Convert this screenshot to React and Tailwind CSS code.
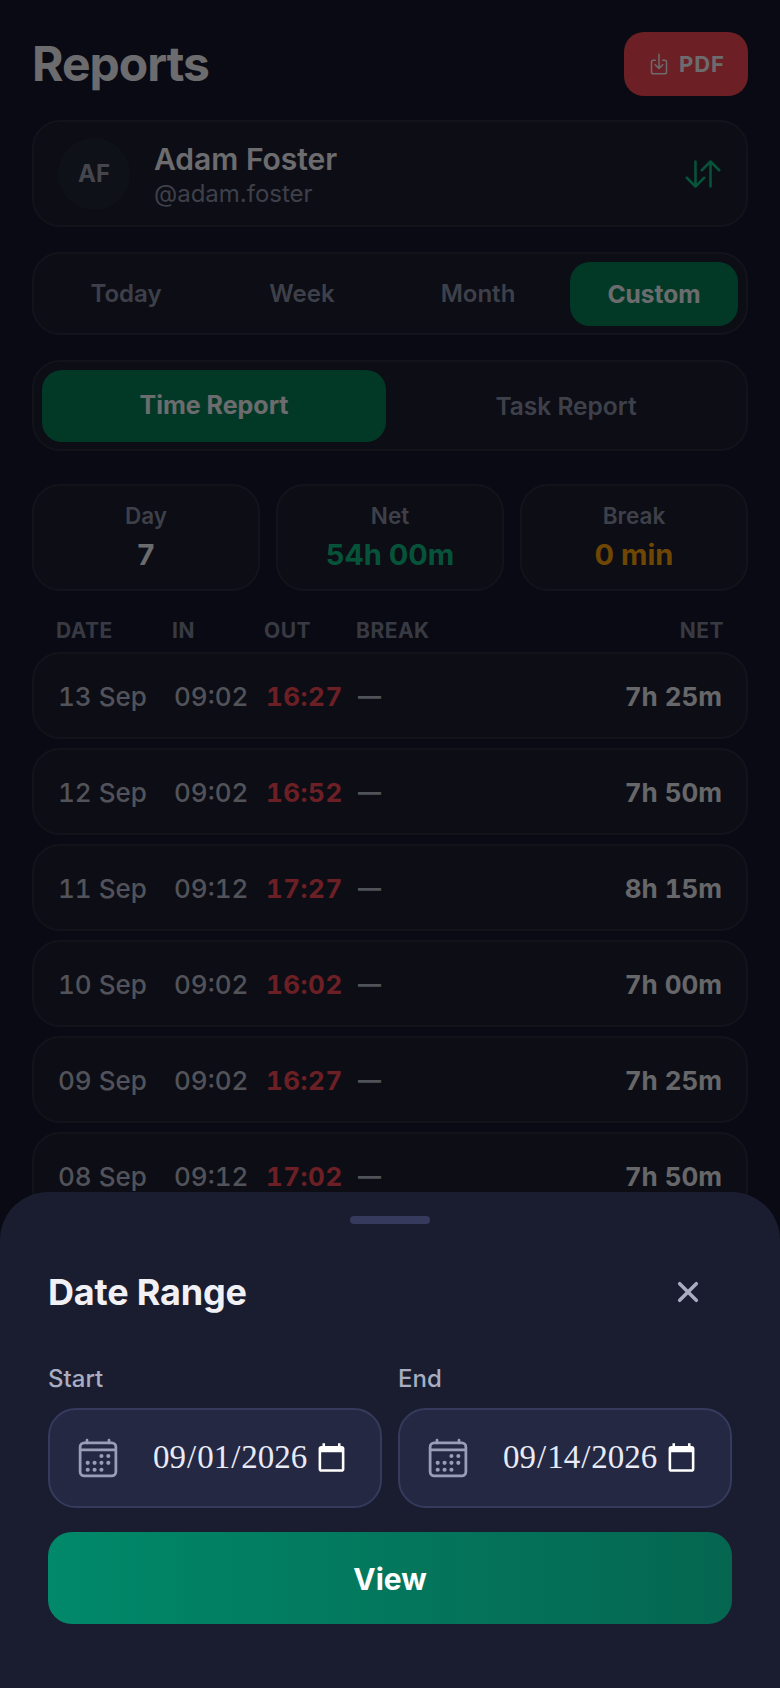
import React from 'react';
import { IoCalendarOutline, IoClose, IoDownloadOutline, IoSwapVertical } from 'react-icons/io5';

const rows = [
  ['13 Sep', '09:02', '16:27', '7h 25m'],
  ['12 Sep', '09:02', '16:52', '7h 50m'],
  ['11 Sep', '09:12', '17:27', '8h 15m'],
  ['10 Sep', '09:02', '16:02', '7h 00m'],
  ['09 Sep', '09:02', '16:27', '7h 25m'],
  ['08 Sep', '09:12', '17:02', '7h 50m'],
];

const cols = 'grid grid-cols-[116px_92px_92px_1fr_auto] items-center';
const panel = 'border-2 border-[#282b3c] bg-[#1b1e30]';

const Stat = ({ label, value, color }) => (
  <div className={`flex h-[107px] flex-col items-center justify-center rounded-[28px] ${panel}`}>
    <span className="text-[22.5px] leading-7 font-semibold text-[#8b8fa3]">{label}</span>
    <span className={`mt-[7px] text-[29px] leading-9 font-bold ${color}`}>{value}</span>
  </div>
);

const DateField = ({ label, value }) => (
  <div className="min-w-0">
    <label className="mb-[13px] block text-[24px] leading-8 font-medium text-[#a9adc1]">{label}</label>
    <div className="flex h-[100px] items-center rounded-[28px] border-2 border-[#363a5c] bg-[#252842] pr-[30px] pl-[26px]">
      <IoCalendarOutline className="shrink-0 text-[44px] text-[#9a9db5]" />
      <input
        type="date"
        defaultValue={value}
        className="ml-[32px] min-w-0 flex-1 bg-transparent text-[33px] text-[#e8eaf6] [color-scheme:dark] [font-family:'Liberation_Serif',serif] outline-none"
      />
    </div>
  </div>
);

export default function App() {
  return (
    <div className="relative h-[1688px] w-[780px] overflow-hidden bg-[#14172b] px-8 pt-8 font-['Inter',sans-serif] text-[#f0f0f5]">
      {/* Cabecalho */}
      <div className="flex h-16 items-center justify-between">
        <h1 className="text-[48px] font-bold tracking-[-1px]">Reports</h1>
        <button className="flex h-16 w-[124px] items-center justify-center gap-2 rounded-[20px] bg-[#f04650] text-[22px] font-bold tracking-[1px] text-[#f0f0f5]">
          <IoDownloadOutline className="text-[24px]" />
          PDF
        </button>
      </div>

      {/* Usuario */}
      <div className={`mt-6 flex h-[107px] items-center rounded-[28px] px-6 ${panel}`}>
        <div className="flex h-[72px] w-[72px] items-center justify-center rounded-full bg-[#202634] text-[24px] font-bold text-[#9a9cab]">
          AF
        </div>
        <div className="ml-6 flex-1">
          <div className="mt-[2px] text-[30px] leading-9 font-semibold">Adam Foster</div>
          <div className="mt-[3px] text-[24px] leading-7 text-[#8b8fa3]">@adam.foster</div>
        </div>
        <IoSwapVertical className="mr-[-1px] text-[40px] text-[#10b981]" />
      </div>

      {/* Periodo */}
      <div className={`mt-[25px] grid h-[83px] grid-cols-4 items-center gap-2 rounded-[28px] p-2 ${panel}`}>
        {['Today', 'Week', 'Month'].map((t) => (
          <div key={t} className="text-center text-[24px] font-semibold text-[#8b8fa3]">{t}</div>
        ))}
        <div className="flex h-16 items-center justify-center rounded-[20px] bg-[#057f56] text-[24.5px] font-bold">Custom</div>
      </div>

      {/* Tipo de relatorio */}
      <div className={`mt-[25px] grid h-[91px] grid-cols-2 items-center gap-2 rounded-[28px] p-2 ${panel}`}>
        <div className="flex h-[72px] items-center justify-center rounded-[20px] bg-[#057f56] text-[25px] font-bold">Time Report</div>
        <div className="text-center text-[24.5px] font-semibold text-[#8b8fa3]">Task Report</div>
      </div>

      {/* Resumo */}
      <div className="mt-[33px] grid grid-cols-3 gap-4">
        <Stat label="Day" value="7" color="text-[#f0f0f5]" />
        <Stat label="Net" value="54h 00m" color="text-[#10b981]" />
        <Stat label="Break" value="0 min" color="text-[#f59e0b]" />
      </div>

      {/* Tabela */}
      <div className={`${cols} mt-[22px] mb-[3px] h-9 px-6 text-[21px] font-bold tracking-[0.5px] text-[#7c8094]`}>
        <span>DATE</span>
        <span>IN</span>
        <span>OUT</span>
        <span>BREAK</span>
        <span className="text-right">NET</span>
      </div>
      <div className="flex flex-col gap-[9px]">
        {rows.map(([date, inTime, outTime, net]) => (
          <div key={date} className={`${cols} h-[87px] rounded-[28px] px-6 pt-[2px] text-[26px] tabular-nums ${panel}`}>
            <span className="font-medium text-[#b6b8c6]">{date}</span>
            <span className="font-medium text-[#b6b8c6]">{inTime}</span>
            <span className="font-bold tracking-[0.5px] text-[#f04650]">{outTime}</span>
            <span className="text-[23px] font-bold text-[#b6b8c6]">—</span>
            <span className="font-bold text-[#e4e4ec]">{net}</span>
          </div>
        ))}
      </div>

      {/* Fundo escurecido do modal */}
      <div className="absolute inset-0 bg-black/55" />

      {/* Modal de periodo */}
      <div className="absolute inset-x-0 bottom-0 h-[496px] rounded-t-[48px] bg-[#1a1d30] px-12 pt-6">
        <div className="mx-auto h-2 w-20 rounded bg-[#363a5c]" />
        <div className="mt-[44px] flex h-[48px] items-center justify-between">
          <h2 className="text-[36px] font-bold tracking-[-0.2px]">Date Range</h2>
          <IoClose className="mr-[25px] text-[38px] text-[#a9adc1]" />
        </div>
        <div className="mt-[47px] grid grid-cols-2 gap-4">
          <DateField label="Start" value="2026-09-01" />
          <DateField label="End" value="2026-09-14" />
        </div>
        <button className="mt-[24px] h-[92px] w-full rounded-[24px] bg-gradient-to-r from-[#00896a] to-[#056650] pt-[2px] text-[30px] font-bold text-white">
          View
        </button>
      </div>
    </div>
  );
}
